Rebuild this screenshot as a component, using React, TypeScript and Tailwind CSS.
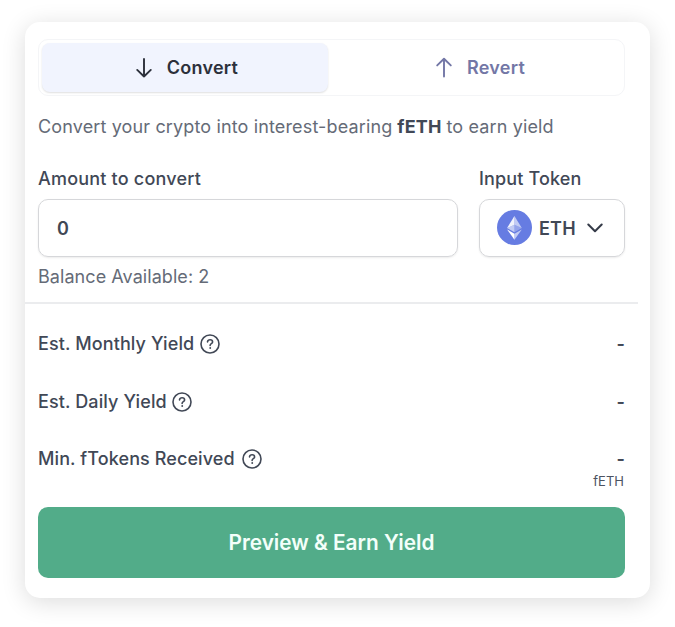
import type { ReactNode } from "react";

function Arrow({ up = false }: { up?: boolean }) {
  return (
    <svg width="18" height="22" viewBox="0 0 18 22" fill="none" stroke="currentColor" strokeWidth="1.9" strokeLinecap="round" strokeLinejoin="round">
      <path d={up ? "M9 19.5V2M2.2 8.4 9 1.8l6.8 6.6" : "M9 2V19.5M2.2 12.9 9 19.5l6.8-6.6"} />
    </svg>
  );
}

function HelpIcon() {
  return (
    <svg width="20" height="20" viewBox="0 0 20 20" fill="none" stroke="currentColor" strokeWidth="1.6" strokeLinecap="round" strokeLinejoin="round">
      <circle cx="10" cy="10" r="9" />
      <path d="M7.5 7.9c.2-1.3 1.2-2.1 2.6-2.1 1.400 0 2.500.8 2.500 2.100 0 1.700-2.500 1.900-2.500 3.500" />
      <circle cx="10.1" cy="14" r=".45" fill="currentColor" strokeWidth="1" />
    </svg>
  );
}

function EthIcon() {
  return (
    <svg className="mb-[1px]" width="35" height="35" viewBox="0 0 32 32">
      <circle cx="16" cy="16" r="16" fill="#667ce2" />
      <g fill="#fff" transform="translate(-.5 .3) translate(16 16) scale(.9) translate(-16 -16)">
        <path fillOpacity=".602" d="M16.498 4v8.870l7.497 3.350z" />
        <path fillOpacity=".9" d="M16.498 4 9 16.220l7.498-3.350z" />
        <path fillOpacity=".602" d="M16.498 21.968v6.027L24 17.616z" />
        <path d="M16.498 27.995v-6.028L9 17.616z" />
        <path fillOpacity=".3" d="m16.498 20.573 7.497-4.353-7.497-3.348z" />
        <path fillOpacity=".602" d="m9 16.220 7.498 4.353v-7.701z" />
      </g>
    </svg>
  );
}

function Row({ label, gap, children }: { label: string; gap: string; children?: ReactNode }) {
  return (
    <div className="flex h-[57.5px] items-center justify-between text-[#414856]">
      <div className={`flex items-center ${gap}`}>
        <span className="font-medium tracking-[0.1px]">{label}</span>
        <HelpIcon />
      </div>
      <div className="flex flex-col items-end font-semibold">
        -{children}
      </div>
    </div>
  );
}

export default function App() {
  return (
    <div className="h-[627px] w-[675px] bg-white pl-[25px] pt-[22px] font-['Inter',sans-serif] text-[18px] leading-6 whitespace-nowrap">
      <main className="h-[576px] w-[625px] rounded-[15px] bg-white pl-[13px] pr-[25px] pt-[17px] shadow-[0_4px_24px_rgba(0,0,0,0.14)]">
        <div className="flex h-[57px] rounded-[10px] border border-[#f4f5f7] p-[3px] font-semibold tracking-[0.25px]">
          <button className="flex h-[49px] w-[286px] items-center justify-center gap-[14px] rounded-lg bg-[#f1f4fe] pl-[3px] text-[#2c303b] shadow-[0_1px_2px_rgba(0,0,0,0.13)]">
            <Arrow />
            Convert
          </button>
          <button className="flex flex-1 items-center justify-center gap-[14px] pl-[11px] text-[#7377a6]">
            <Arrow up />
            Revert
          </button>
        </div>
        <p className="flex h-[61px] items-center gap-[5px] tracking-[0.14px] text-[#656b77]">
          Convert your crypto into interest-bearing
          <b className="font-bold text-[#414856]">fETH</b>
          to earn yield
        </p>
        <div className="flex gap-[21px]">
          <div className="w-[420px]">
            <label className="flex h-[42px] items-center pt-[1px] font-medium tracking-[0.2px] text-[#414856]">Amount to convert</label>
            <div className="flex h-[58px] items-center rounded-[10px] border border-[#d6d7da] pl-[18px] pt-[1px] font-semibold text-[#414856] shadow-[0_1px_2px_rgba(0,0,0,0.08)]">0</div>
            <div className="mt-[8px] tracking-[0.06px] text-[#656b77]">Balance Available: 2</div>
          </div>
          <div className="w-[146px]">
            <label className="flex h-[42px] items-center pt-[1px] font-medium tracking-[0.15px] text-[#414856]">Input Token</label>
            <button className="flex h-[58px] w-full items-center rounded-[10px] border border-[#d6d7da] pl-[17px] font-semibold text-[#414856] shadow-[0_1px_2px_rgba(0,0,0,0.08)]">
              <EthIcon />
              <span className="ml-[7px] pt-[1px] tracking-[0.2px]">ETH</span>
              <svg className="ml-[11px]" width="16" height="10" viewBox="0 0 16 10" fill="none" stroke="#353b48" strokeWidth="2" strokeLinecap="round" strokeLinejoin="round">
                <path d="m1.300 1.500 6.700 6.700 6.700-6.700" />
              </svg>
            </button>
          </div>
        </div>
        <div className="-ml-[13px] -mr-[13px] mt-[13px] h-[2px] bg-[#ebecee]" />
        <div className="mt-[11.4px]">
          <Row label="Est. Monthly Yield" gap="gap-[6px]" />
          <Row label="Est. Daily Yield" gap="gap-[5px]" />
          <div className="relative">
            <Row label="Min. fTokens Received" gap="gap-[7.5px]" />
            <span className="absolute right-[1px] top-[38.6px] text-[13px] text-[#4c5361]">fETH</span>
          </div>
        </div>
        <button className="mt-[19.1px] h-[71.500px] w-full rounded-[10px] bg-[#52ac89] pt-[1px] text-[20.8px] font-semibold text-[#f3fffa]">
          Preview &amp; Earn Yield
        </button>
      </main>
    </div>
  );
}
